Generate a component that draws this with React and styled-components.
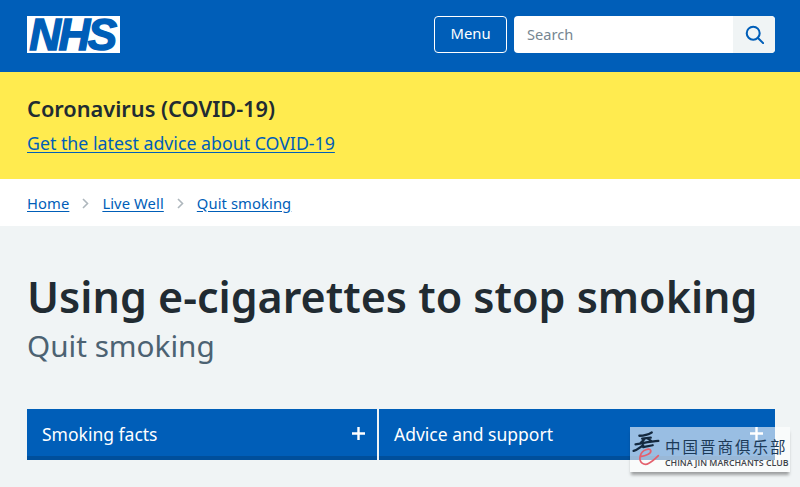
import React from "react";
import styled, { createGlobalStyle } from "styled-components";

const GlobalStyle = createGlobalStyle`
  html, body {
    margin: 0;
    padding: 0;
    background: #f0f4f5;
    font-family: "Noto Sans", "Open Sans", Arial, sans-serif;
    overflow: hidden;
  }
`;

const App = () => {
  return (
    <Page>
      <GlobalStyle />
      <Header>
        <Logo>NHS</Logo>
        <HeaderRight>
          <MenuButton>Menu</MenuButton>
          <SearchBox>
            <SearchInput>Search</SearchInput>
            <SearchButton>
              <svg width="19" height="19" viewBox="0 0 22 22" fill="none" stroke="#005eb8" strokeWidth="2.4" strokeLinecap="round">
                <circle cx="9.5" cy="9.5" r="7.5" />
                <path d="M15 15l6 6" />
              </svg>
            </SearchButton>
          </SearchBox>
        </HeaderRight>
      </Header>

      <Alert>
        <AlertTitle>Coronavirus (COVID-19)</AlertTitle>
        <AlertLink>Get the latest advice about COVID-19</AlertLink>
      </Alert>

      <Breadcrumb>
        <Crumb>Home</Crumb>
        <Chevron />
        <Crumb>Live Well</Crumb>
        <Chevron />
        <Crumb>Quit smoking</Crumb>
      </Breadcrumb>

      <Main>
        <Title>Using e-cigarettes to stop smoking</Title>
        <Subtitle>Quit smoking</Subtitle>
        <Nav>
          <NavItem>
            Smoking facts
            <Plus />
          </NavItem>
          <NavItem>
            Advice and support
            <Plus />
          </NavItem>
        </Nav>
      </Main>

      <Watermark>
        <WatermarkMark viewBox="0 0 30 40">
          <path d="M8 5 C12 5 17 4 21 1.5 M11 8 L20 7 M4 14 C11 13 20 11 28 10.5 M13 9 L9 13 M17 8 L21 11 M2 21 C6 20 9 17 12 15 M12 17 L22 15" stroke="#14293f" strokeWidth="2.4" fill="none" strokeLinecap="round" />
          <path d="M9 27 C14 26 21 24 20 20.5 C19 18 11 19 9 26 C7 33 13 37 18 34 C22 32 26 28 28 26" stroke="#e4606d" strokeWidth="1.8" fill="none" strokeLinecap="round" />
        </WatermarkMark>
        <WatermarkText>
          <WatermarkCn>中国晋商俱乐部</WatermarkCn>
          <WatermarkEn>CHINA JIN MARCHANTS CLUB</WatermarkEn>
        </WatermarkText>
      </Watermark>
    </Page>
  );
};

export default App;

const Chevron = () => (
  <ChevronWrap>
    <svg width="7" height="11" viewBox="0 0 7 11" fill="none" stroke="#aeb7bd" strokeWidth="1.6">
      <path d="M1 1l4.5 4.5L1 10" />
    </svg>
  </ChevronWrap>
);

const Plus = () => (
  <PlusWrap>
    <svg width="13" height="13" viewBox="0 0 13 13" stroke="#fff" strokeWidth="2.4">
      <path d="M6.5 0v13M0 6.5h13" />
    </svg>
  </PlusWrap>
);

const Page = styled.div`
  position: relative;
  width: 800px;
  height: 487px;
  overflow: hidden;
`;

const Header = styled.header`
  height: 72px;
  box-sizing: border-box;
  background: #005eb8;
  padding: 16px 25px 0 27px;
  display: flex;
  justify-content: space-between;
  align-items: flex-start;
`;

const Logo = styled.div`
  width: 93px;
  height: 37px;
  box-sizing: border-box;
  padding-right: 3px;
  background: #fff;
  color: #005eb8;
  font-family: "Liberation Sans", Arial, sans-serif;
  font-size: 44px;
  font-weight: 700;
  font-style: italic;
  line-height: 37px;
  letter-spacing: -2.5px;
  text-align: center;
  -webkit-text-stroke: 1.4px #005eb8;
`;

const HeaderRight = styled.div`
  display: flex;
  gap: 7px;
`;

const MenuButton = styled.div`
  width: 73px;
  height: 37px;
  box-sizing: border-box;
  border: 1px solid #fff;
  border-radius: 4px;
  padding-bottom: 3px;
  color: #fff;
  font-size: 14.8px;
  display: flex;
  align-items: center;
  justify-content: center;
`;

const SearchBox = styled.div`
  width: 261px;
  height: 37px;
  display: flex;
  background: #fff;
  border-radius: 4px;
  overflow: hidden;
`;

const SearchInput = styled.div`
  flex: 1;
  box-sizing: border-box;
  padding: 0 0 2px 13px;
  color: #768692;
  font-size: 14.6px;
  display: flex;
  align-items: center;
`;

const SearchButton = styled.div`
  width: 42px;
  background: #f0f4f5;
  display: flex;
  align-items: center;
  justify-content: center;
`;

const Alert = styled.section`
  height: 107px;
  box-sizing: border-box;
  background: #ffeb4f;
  padding: 23px 27px 0;
`;

const AlertTitle = styled.h2`
  margin: 0;
  color: #212b32;
  font-size: 21.75px;
  font-weight: 600;
  line-height: 28px;
`;

const AlertLink = styled.a`
  display: block;
  margin-top: 8px;
  color: #005eb8;
  font-size: 17.75px;
  line-height: 24px;
  text-decoration: underline;
  text-underline-offset: 2px;
`;

const Breadcrumb = styled.nav`
  height: 47px;
  box-sizing: border-box;
  padding: 0 27px;
  background: #fff;
  display: flex;
  align-items: center;
`;

const Crumb = styled.a`
  color: #005eb8;
  font-size: 14.75px;
  letter-spacing: 0.1px;
  text-decoration: underline;
  text-underline-offset: 2px;
`;

const ChevronWrap = styled.span`
  display: flex;
  width: 33px;
  padding-top: 2px;
  justify-content: center;
`;

const Main = styled.main`
  padding: 42px 25px 0 27px;
`;

const Title = styled.h1`
  margin: 0;
  color: #212b32;
  font-size: 43px;
  font-weight: 600;
  line-height: 58px;
  white-space: nowrap;
`;

const Subtitle = styled.div`
  margin-top: 1px;
  color: #4c6272;
  font-size: 29.7px;
  line-height: 38px;
`;

const Nav = styled.div`
  margin-top: 44px;
  display: grid;
  grid-template-columns: 350px 396px;
  gap: 2px;
`;

const NavItem = styled.div`
  height: 51px;
  box-sizing: border-box;
  background: #005eb8;
  border-bottom: 4px solid #004f9b;
  padding: 2px 12px 0 15px;
  color: #fff;
  font-size: 17.5px;
  display: flex;
  align-items: center;
  justify-content: space-between;
`;

const PlusWrap = styled.span`
  display: flex;
`;

const Watermark = styled.div`
  position: absolute;
  left: 630px;
  top: 427px;
  width: 160px;
  height: 45px;
  background: rgba(255, 255, 255, 0.6);
  box-shadow: 0 4px 3px -1px rgba(0, 0, 0, 0.35);
  display: flex;
  align-items: flex-end;
  gap: 4px;
  padding: 0 0 3px 1px;
  box-sizing: border-box;
`;

const WatermarkMark = styled.svg`
  width: 30px;
  height: 38px;
  flex: none;
`;

const WatermarkText = styled.div`
  display: flex;
  flex-direction: column;
  gap: 2px;
`;

const WatermarkCn = styled.div`
  color: #1c3a58;
  font-family: "Noto Sans CJK SC", sans-serif;
  font-size: 15.5px;
  line-height: 20px;
  letter-spacing: 2px;
  white-space: nowrap;
`;

const WatermarkEn = styled.div`
  color: #3f444a;
  font-family: "Open Sans", sans-serif;
  font-size: 8.8px;
  font-weight: 600;
  line-height: 11px;
  white-space: nowrap;
`;
